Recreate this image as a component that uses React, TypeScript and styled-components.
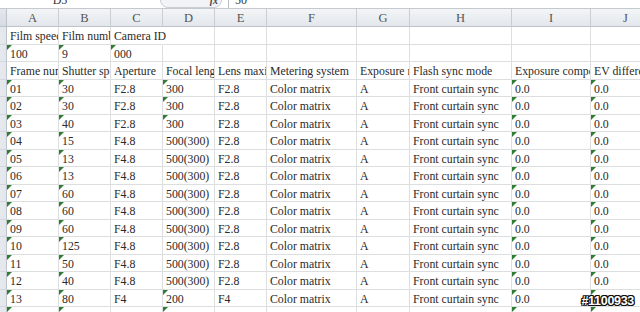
import React from "react";
import styled, { createGlobalStyle } from "styled-components";

const GlobalStyle = createGlobalStyle`
  html, body {
    margin: 0;
    padding: 0;
    background: #fff;
    overflow: hidden;
  }
`;

// column widths: row-number gutter first (mostly scrolled off), then A..J
const COLS = [26, 52, 52, 52, 52, 52, 90, 53, 102, 79, 70];
const LETTERS = ["A", "B", "C", "D", "E", "F", "G", "H", "I", "J"];

const Sheet = styled.div`
  position: relative;
  width: 640px;
  height: 312px;
  overflow: hidden;
  font-family: "Liberation Serif", "Times New Roman", serif;
  background: #fff;
`;

const FormulaStrip = styled.div`
  height: 8px;
  border-bottom: 1px solid #c4c9cf;
  display: flex;
  align-items: flex-end;
  overflow: hidden;
`;

const NameBox = styled.div`
  width: 120px;
  height: 16px;
  line-height: 16px;
  font-size: 12px;
  color: #333;
  text-align: center;
  flex-shrink: 0;
`;

const ButtonGroup = styled.div`
  margin-left: 40px;
  width: 62px;
  height: 16px;
  box-sizing: border-box;
  border: 1px solid #c9ced5;
  border-radius: 8px;
  background: #f1f3f6;
  display: flex;
  justify-content: flex-end;
  align-items: flex-end;
  padding-right: 3px;
  flex-shrink: 0;
`;

const FxMark = styled.span`
  font-size: 10px;
  font-style: italic;
  font-weight: bold;
  color: #444;
  line-height: 12px;
`;

const Divider = styled.div`
  width: 1px;
  height: 16px;
  margin-left: 6px;
  background: #b8bdc3;
  flex-shrink: 0;
`;

const FormulaValue = styled.div`
  height: 16px;
  line-height: 16px;
  margin-left: 6px;
  font-size: 12px;
  color: #333;
`;

const Grid = styled.div`
  display: grid;
  grid-template-columns: ${COLS.map((c) => `${c}px`).join(" ")};
  grid-template-rows: 18px;
  grid-auto-rows: 17.5px;
  margin-left: -19px;
`;

const Corner = styled.div`
  background: linear-gradient(#e4e8ed, #d6dbe2);
  border-right: 1px solid #bcc3cb;
  border-bottom: 1px solid #bcc3cb;
`;

const ColHead = styled.div`
  box-sizing: border-box;
  background: linear-gradient(#f3f5f7, #e3e7ec);
  border-right: 1px solid #c9ced4;
  border-bottom: 1px solid #bcc3cb;
  color: #555;
  font-size: 12.5px;
  line-height: 18px;
  text-align: center;
`;

const RowHead = styled.div`
  box-sizing: border-box;
  background: linear-gradient(90deg, #eef1f4, #e3e7ec);
  border-right: 1px solid #bcc3cb;
  border-bottom: 1px solid #d3d7dc;
  color: #555;
  font-size: 12px;
  line-height: 17px;
  text-align: center;
  overflow: hidden;
`;

const Cell = styled.div<{ $spill?: boolean; $flag?: boolean }>`
  position: relative;
  box-sizing: border-box;
  border-right: 1px solid ${(p) => (p.$spill ? "transparent" : "#dcdedf")};
  border-bottom: 1px solid #dcdedf;
  padding-left: 3px;
  font-size: 11.8px;
  line-height: 18px;
  color: #2a2a2a;
  white-space: nowrap;
  overflow: ${(p) => (p.$spill ? "visible" : "hidden")};
  z-index: ${(p) => (p.$spill ? 1 : 0)};

  ${(p) =>
    p.$flag &&
    `
    &::before {
      content: "";
      position: absolute;
      top: 0;
      left: 0;
      border-top: 5px solid #2f7d32;
      border-right: 5px solid transparent;
    }
  `}
`;

const Watermark = styled.div`
  position: absolute;
  right: 6px;
  bottom: 4px;
  font-family: "Liberation Sans", Arial, sans-serif;
  font-weight: bold;
  font-size: 12.5px;
  letter-spacing: -0.3px;
  color: #fff;
  text-shadow:
    1px 0 0 #111, -1px 0 0 #111, 0 1px 0 #111, 0 -1px 0 #111,
    1px 1px 0 #111, -1px -1px 0 #111, 1px -1px 0 #111, -1px 1px 0 #111;
  z-index: 5;
`;

type CellSpec = { text?: string; flag?: boolean; spill?: boolean };

const frames: [string, string, string, string, string][] = [
  ["01", "30", "F2.8", "300", "F2.8"],
  ["02", "30", "F2.8", "300", "F2.8"],
  ["03", "40", "F2.8", "300", "F2.8"],
  ["04", "15", "F4.8", "500(300)", "F2.8"],
  ["05", "13", "F4.8", "500(300)", "F2.8"],
  ["06", "13", "F4.8", "500(300)", "F2.8"],
  ["07", "60", "F4.8", "500(300)", "F2.8"],
  ["08", "60", "F4.8", "500(300)", "F2.8"],
  ["09", "60", "F4.8", "500(300)", "F2.8"],
  ["10", "125", "F4.8", "500(300)", "F2.8"],
  ["11", "50", "F4.8", "500(300)", "F2.8"],
  ["12", "40", "F4.8", "500(300)", "F2.8"],
  ["13", "80", "F4", "200", "F4"],
];

const blank = (): CellSpec[] => LETTERS.map(() => ({}));

const rows: CellSpec[][] = [
  [
    { text: "Film speed" },
    { text: "Film number" },
    { text: "Camera ID", spill: true },
    ...blank().slice(3),
  ],
  [
    { text: "100", flag: true },
    { text: "9", flag: true },
    { text: "000", flag: true },
    ...blank().slice(3),
  ],
  [
    "Frame number",
    "Shutter speed",
    "Aperture",
    "Focal length",
    "Lens maximum aperture",
    "Metering system",
    "Exposure mode",
    "Flash sync mode",
    "Exposure compensation",
    "EV difference",
  ].map((t) => ({ text: t })),
  ...frames.map(([frame, shutter, aperture, focal, lens]) => [
    { text: frame, flag: true },
    { text: shutter, flag: true },
    { text: aperture },
    { text: focal, flag: !focal.includes("(") },
    { text: lens },
    { text: "Color matrix" },
    { text: "A" },
    { text: "Front curtain sync" },
    { text: "0.0", flag: true },
    { text: "0.0", flag: true },
  ]),
  LETTERS.map((_, i) => ({ flag: [0, 1, 3, 8, 9].includes(i) })),
];

export default function App() {
  return (
    <Sheet>
      <GlobalStyle />
      <FormulaStrip>
        <NameBox>D5</NameBox>
        <ButtonGroup>
          <FxMark>fx</FxMark>
        </ButtonGroup>
        <Divider />
        <FormulaValue>50</FormulaValue>
      </FormulaStrip>
      <Grid>
        <Corner />
        {LETTERS.map((l) => (
          <ColHead key={l}>{l}</ColHead>
        ))}
        {rows.map((row, r) => (
          <React.Fragment key={r}>
            <RowHead>{r + 1}</RowHead>
            {row.map((c, i) => (
              <Cell key={i} $flag={c.flag} $spill={c.spill}>
                {c.text}
              </Cell>
            ))}
          </React.Fragment>
        ))}
      </Grid>
      <Watermark>#1100933</Watermark>
    </Sheet>
  );
}
